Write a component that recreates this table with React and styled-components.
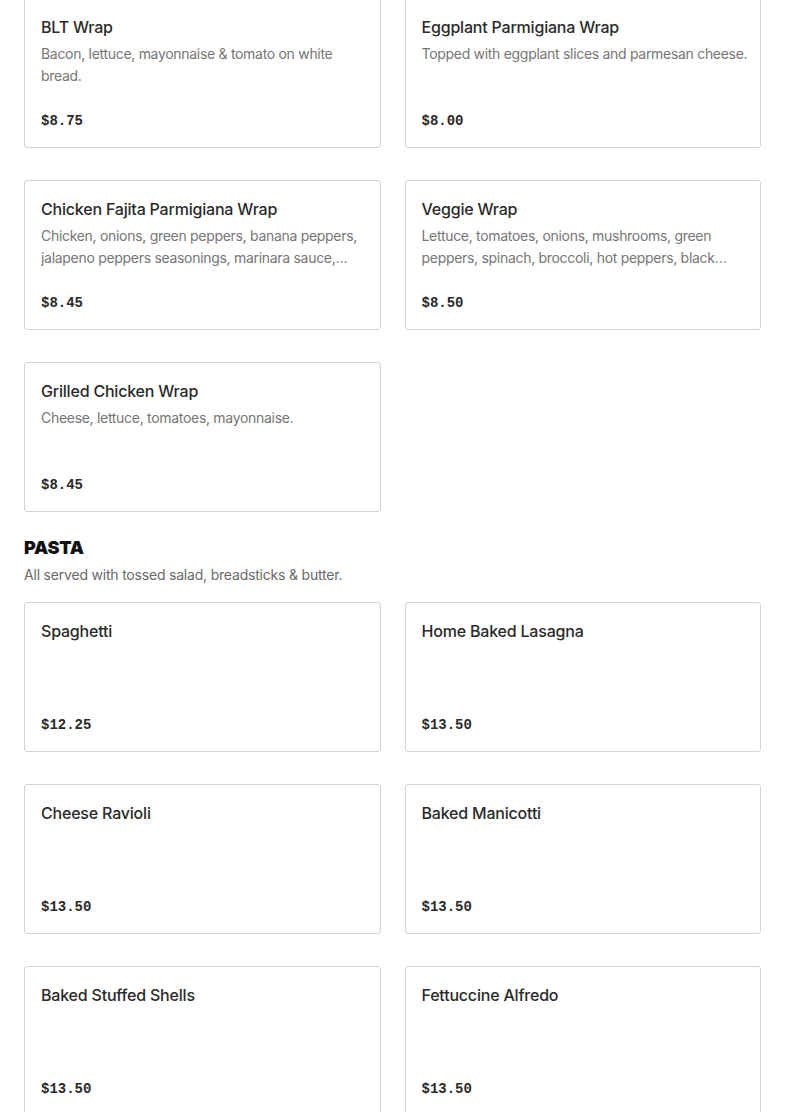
import React from 'react';
import styled, { createGlobalStyle } from 'styled-components';

const GlobalStyle = createGlobalStyle`
  body {
    margin: 0;
    background: #fff;
    font-family: Inter, "Noto Sans", sans-serif;
    color: #2d2d2d;
  }
`;

const Page = styled.div`
  padding: 0 24px;
  margin-top: -2px;
`;

const Grid = styled.div`
  display: grid;
  grid-template-columns: 1fr 1fr;
  column-gap: 24px;
  row-gap: 32px;
`;

const Card = styled.div`
  height: 150px;
  box-sizing: border-box;
  border: 1px solid #d3d3d3;
  border-radius: 3px;
  padding: 16px 10px 16px 16px;
  display: flex;
  flex-direction: column;
`;

const Title = styled.div`
  font-size: 16px;
  font-weight: 500;
  line-height: 24px;
  letter-spacing: -0.2px;
  color: #2a2a2a;
`;

const Desc = styled.div`
  margin-top: 4px;
  font-size: 14px;
  line-height: 22px;
  letter-spacing: -0.3px;
  color: #767676;
  display: -webkit-box;
  -webkit-line-clamp: 2;
  -webkit-box-orient: vertical;
  overflow: hidden;
`;

const Price = styled.div`
  margin-top: auto;
  font-family: "Liberation Mono", monospace;
  font-weight: 700;
  font-size: 14px;
  line-height: 20px;
  color: #2a2a2a;
`;

const SectionTitle = styled.h2`
  margin: 24px 0 0;
  font-size: 18px;
  font-weight: 900;
  line-height: 24px;
  color: #111;
  letter-spacing: -0.2px;
`;

const SectionNote = styled.p`
  margin: 4px 0 16px;
  font-size: 14px;
  line-height: 22px;
  letter-spacing: -0.2px;
  color: #6a6a6a;
`;

const wraps = [
  { name: 'BLT Wrap', desc: 'Bacon, lettuce, mayonnaise & tomato on white bread.', price: '$8.75' },
  { name: 'Eggplant Parmigiana Wrap', desc: 'Topped with eggplant slices and parmesan cheese.', price: '$8.00' },
  { name: 'Chicken Fajita Parmigiana Wrap', desc: 'Chicken, onions, green peppers, banana peppers, jalapeno peppers seasonings, marinara sauce, mozzarella cheese.', price: '$8.45' },
  { name: 'Veggie Wrap', desc: 'Lettuce, tomatoes, onions, mushrooms, green peppers, spinach, broccoli, hot peppers, black olives.', price: '$8.50' },
  { name: 'Grilled Chicken Wrap', desc: 'Cheese, lettuce, tomatoes, mayonnaise.', price: '$8.45' },
];

const pasta = [
  { name: 'Spaghetti', price: '$12.25' },
  { name: 'Home Baked Lasagna', price: '$13.50' },
  { name: 'Cheese Ravioli', price: '$13.50' },
  { name: 'Baked Manicotti', price: '$13.50' },
  { name: 'Baked Stuffed Shells', price: '$13.50' },
  { name: 'Fettuccine Alfredo', price: '$13.50' },
];

const MenuCard = ({ item }) => (
  <Card>
    <Title>{item.name}</Title>
    {item.desc && <Desc>{item.desc}</Desc>}
    <Price>{item.price}</Price>
  </Card>
);

export default function App() {
  return (
    <Page>
      <GlobalStyle />
      <Grid>
        {wraps.map((w) => <MenuCard key={w.name} item={w} />)}
      </Grid>
      <SectionTitle>PASTA</SectionTitle>
      <SectionNote>All served with tossed salad, breadsticks &amp; butter.</SectionNote>
      <Grid>
        {pasta.map((p) => <MenuCard key={p.name} item={p} />)}
      </Grid>
    </Page>
  );
}
